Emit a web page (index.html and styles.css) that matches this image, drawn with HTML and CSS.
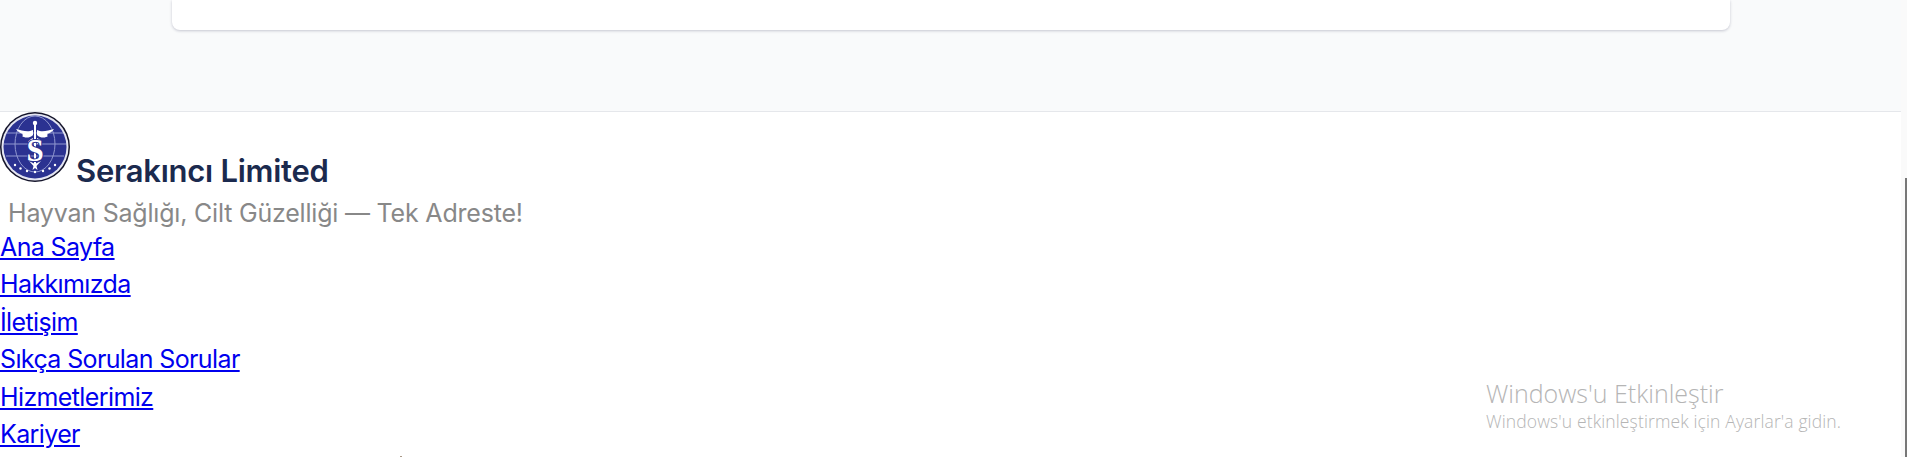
FILE: index.html
```html
<!DOCTYPE html>
<html lang="tr">
<head>
    <meta charset="UTF-8">
    <title>Serakıncı Limited</title>
    <link rel="stylesheet" href="styles.css">
</head>
<body>
    <div class="page">
        <!-- end of the content area -->
        <div class="content">
            <div class="card"></div>
        </div>

        <div class="footer">
            <div class="brand">
                <svg class="logo" viewBox="0 0 70 70" role="img" aria-label="Serakıncı logo">
                    <circle cx="35" cy="35" r="35" fill="#14142a"/>
                    <circle cx="35" cy="35" r="33.500" fill="#e4e5f2"/>
                    <circle cx="35" cy="35" r="31.500" fill="#2b3291"/>
                    <g fill="none" stroke="#9198d0" stroke-width="1">
                        <ellipse cx="35" cy="32" rx="20" ry="28"/>
                        <path d="M7 21h56M4 32h62M6 44h58"/>
                    </g>
                    <g fill="#fff">
                        <circle cx="35" cy="11" r="2.200"/>
                        <rect x="34" y="11" width="2" height="44"/>
                        <path d="M33 18C27 21 22 18 16 17c2 3 4 4 7 5-1 .5-1 1 0 1.500-1 .5-1 1 1 1.500 2 1 6 1 9-2l0 3c-2 1-4 2-5 4l5 2z"/>
                        <path d="M37 18c6 3 11 0 17-1-2 3-4 4-7 5 1 .5 1 1 0 1.500 1 .5 1 1-1 1.500-2 1-6 1-9-2l0 3c2 1 4 2 5 4l-5 2z"/>
                        <path d="M29 49l6 3 6-3-4.500 5 1 4-2.500-2-2.500 2 1-4z"/>
                    </g>
                    <text class="logo-s" x="35" y="49" text-anchor="middle">S</text>
                    <g fill="#fff">
                        <circle cx="15" cy="53" r="1.200"/>
                        <circle cx="20.500" cy="56.500" r="1.200"/>
                        <circle cx="27" cy="59" r="1.200"/>
                        <circle cx="35" cy="60" r="1.200"/>
                        <circle cx="43" cy="59" r="1.200"/>
                        <circle cx="49.500" cy="56.500" r="1.200"/>
                        <circle cx="55" cy="53" r="1.200"/>
                    </g>
                </svg><span class="brand-name">Serakıncı Limited</span>
            </div>
            <p class="tagline">Hayvan Sağlığı, Cilt Güzelliği — Tek Adreste!</p>

            <ul class="footer-links">
                <li><a href="#">Ana Sayfa</a></li>
                <li><a href="#">Hakkımızda</a></li>
                <li><a href="#">İletişim</a></li>
                <li><a href="#">Sıkça Sorulan Sorular</a></li>
                <li><a href="#">Hizmetlerimiz</a></li>
                <li><a href="#">Kariyer</a></li>
            </ul>
        </div>
    </div>

    <div class="scrollbar"><div class="scroll-thumb"></div></div>
    <span class="stray-dot"></span>

    <div class="watermark">
        <div class="watermark-title">Windows'u Etkinleştir</div>
        <div class="watermark-text">Windows'u etkinleştirmek için Ayarlar'a gidin.</div>
    </div>
</body>
</html>
```

FILE: styles.css
```css
html, body {
  margin: 0;
  padding: 0;
}

body {
  display: flex;
  height: 457px;
  overflow: hidden;
  background-color: #fff;
  font-family: Inter, "Liberation Sans", sans-serif;
  font-size: 25px;
}

.page {
  flex: 1;
  min-width: 0;
}

.content {
  height: 112px;
  box-sizing: border-box;
  background-color: #f9fafb;
  border-bottom: 1px solid #e5e7eb;
  padding: 0 171px 0 172px;
}

.card {
  height: 30px;
  background-color: #fff;
  border-radius: 0 0 8px 8px;
  box-shadow: 0 1px 3px rgba(20, 20, 60, 0.22);
}

/* logo stands on the text baseline */
.brand {
  line-height: 38px;
  height: 85px;
}

.logo {
  width: 70px;
  height: 70px;
  margin-right: 6px;
}

.brand-name {
  font-size: 31px;
  font-weight: 600;
  color: #1b2a4e;
  letter-spacing: -0.260px;
}

.tagline {
  margin: 0;
  padding-left: 8px;
  color: #888;
  line-height: 32px;
  letter-spacing: -0.200px;
}

.footer-links {
  list-style: none;
  margin: 0;
  padding: 0;
  letter-spacing: -0.620px;
}

.footer-links li {
  line-height: 37.400px;
}

.footer-links a {
  color: #00e;
}

.logo-s {
  font-family: "Liberation Serif", serif;
  font-size: 31px;
  font-weight: 700;
  fill: #fff;
  stroke: #2b3291;
  stroke-width: 2px;
  paint-order: stroke;
}

/* things lying over the page */
.scrollbar {
  width: 6px;
  background-color: #fafafa;
  position: relative;
}

.scroll-thumb {
  position: absolute;
  top: 178px;
  right: 0;
  width: 2px;
  height: 279px;
  background-color: #777;
}

.stray-dot {
  position: absolute;
  left: 400px;
  top: 456px;
  width: 2px;
  height: 1px;
  background-color: #a98;
}

.watermark {
  position: absolute;
  left: 1486px;
  top: 377px;
  font-family: "Open Sans", sans-serif;
  font-weight: 300;
  color: #b5b5b5;
}

.watermark-title {
  font-size: 25px;
  line-height: 32px;
}

.watermark-text {
  font-size: 17.500px;
  line-height: 24px;
  letter-spacing: 0.130px;
}
```
